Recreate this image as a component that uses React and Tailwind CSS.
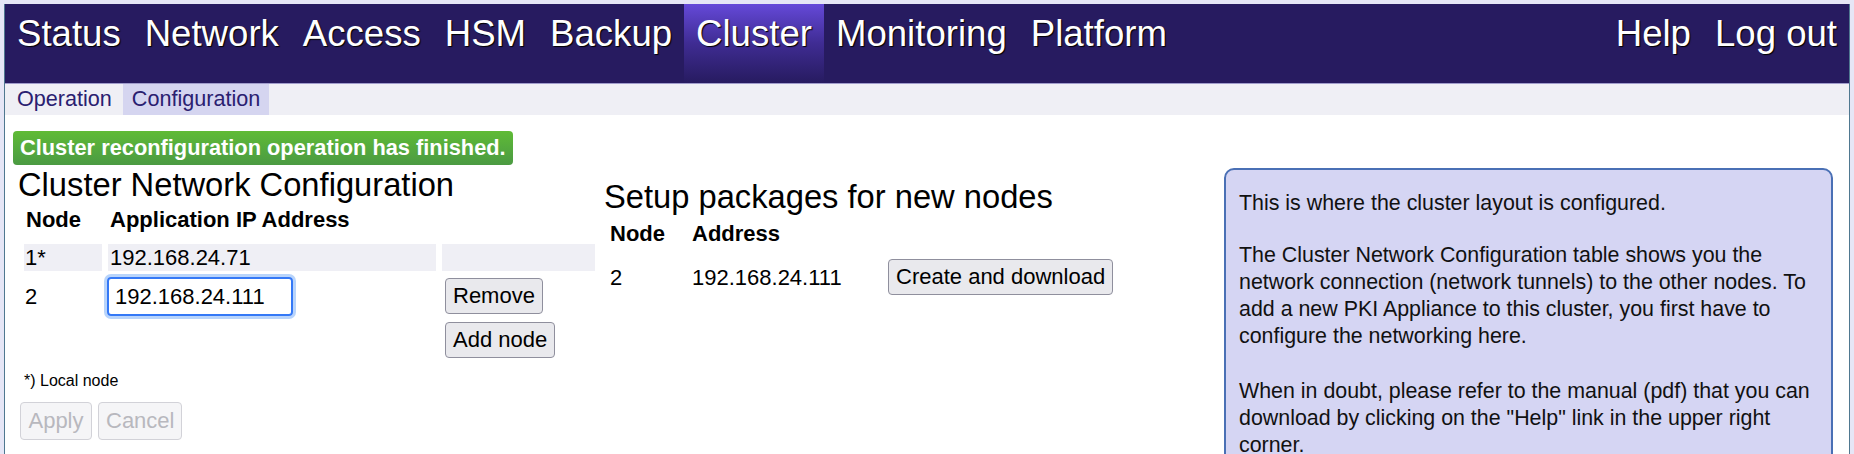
const navItems = ["Status", "Network", "Access", "HSM", "Backup", "Cluster", "Monitoring", "Platform"];

const Button = ({ children, disabled, className = "" }) => (
  <button
    disabled={disabled}
    className={
      "px-[7px] rounded-[4px] border text-[22px] leading-none " +
      (disabled
        ? "bg-[#f5f5f7] border-[#d2d2d8] text-[#b8b8be]"
        : "bg-[#e9e9ed] border-[#8f8f9d] text-black") +
      " " +
      className
    }
  >
    {children}
  </button>
);

const App = () => {
  return (
    <div className="min-h-screen bg-[#e6e6f6] pt-1 px-1 font-['Liberation_Sans',Arial,sans-serif]">
      <div className="border-x border-[#4f7890] bg-white h-[450px] overflow-hidden">
        {/* main nav */}
        <div className="flex h-[80px] bg-[#271b60] border-b border-[#a09ccc] text-white text-[36.6px] leading-none [text-shadow:1px_1px_1px_#000]">
          {navItems.map((item) => (
            <div
              key={item}
              className={
                "px-3 pt-[12px] " +
                (item === "Cluster" ? "bg-linear-to-b from-[#6549d9] via-[#3f2c93] to-[#271b60]" : "")
              }
            >
              {item}
            </div>
          ))}
          <div className="ml-auto flex">
            <div className="px-3 pt-[12px]">Help</div>
            <div className="px-3 pt-[12px]">Log out</div>
          </div>
        </div>

        {/* sub nav */}
        <div className="flex h-[31px] items-stretch gap-[3px] pl-[4px] bg-[#efeff5] text-[21.6px] text-[#2a2070]">
          <div className="px-2 flex items-center">Operation</div>
          <div className="px-[9px] flex items-center bg-[#d5d5f0]">Configuration</div>
        </div>

        <div className="flex items-start pl-2 pr-4 pt-4 text-[22px] text-black">
          {/* left column */}
          <div className="w-[591px] shrink-0">
            <div className="inline-block h-[34px] whitespace-nowrap px-[7px] rounded-[4px] bg-linear-to-b from-[#5fbb35] to-[#4b9a42] text-white font-bold text-[21.8px] leading-[34px]">
              Cluster reconfiguration operation has finished.
            </div>
            <h2 className="mt-1 pl-[5px] text-[32.7px] leading-[32px]">Cluster Network Configuration</h2>

            <div className="ml-[11px] mt-[5px] grid grid-cols-[78px_328px_153px] gap-x-[6px] leading-[27px]">
              <div className="px-[2px] font-bold">Node</div>
              <div className="px-[2px] font-bold">Application IP Address</div>
              <div></div>

              <div className="mt-[11px] px-[1px] bg-[#efeff5]">1*</div>
              <div className="mt-[11px] px-[2px] bg-[#efeff5]">192.168.24.71</div>
              <div className="mt-[11px] bg-[#efeff5]"></div>

              <div className="mt-[6px] px-[1px] flex items-start pt-[6px]">2</div>
              <div className="mt-[6px] -ml-[1px]">
                <input
                  readOnly
                  value="192.168.24.111"
                  className="w-[186px] h-[39px] px-[6px] rounded-[4px] border-2 border-[#3478f6] outline-none ring-[3px] ring-[#b8d4fb] text-[22px] text-black"
                />
              </div>
              <div className="mt-[7px] flex flex-col items-start gap-[8px] pl-[3px]">
                <Button className="h-[36px]">Remove</Button>
                <Button className="h-[36px]">Add node</Button>
              </div>
            </div>

            <div className="ml-[11px] mt-[14px] text-[16px] leading-[18px]">*) Local node</div>
            <div className="ml-[7px] mt-[12px] flex gap-[6px]">
              <Button disabled className="h-[38px] w-[72px]">Apply</Button>
              <Button disabled className="h-[38px] w-[84px]">Cancel</Button>
            </div>
          </div>

          {/* middle column */}
          <div className="mt-[50px]">
            <h2 className="text-[32.7px] leading-[32px]">Setup packages for new nodes</h2>
            <div className="mt-[7px] ml-[6px] grid grid-cols-[82px_196px_auto] gap-y-[12px] items-center leading-[27px]">
              <div className="font-bold">Node</div>
              <div className="font-bold">Address</div>
              <div></div>
              <div>2</div>
              <div>192.168.24.111</div>
              <div>
                <Button className="h-[36px]">Create and download</Button>
              </div>
            </div>
          </div>

          {/* help box */}
          <div className="ml-auto mt-[37px] w-[609px] shrink-0 h-[400px] rounded-[10px] border-2 border-[#4a70b5] bg-[#d5d5f3] pl-[13px] pr-[6px] pt-[20px] text-[21.4px] leading-[27px] text-[#111]">
            <p>This is where the cluster layout is configured.</p>
            <p className="mt-[25px]">
              The Cluster Network Configuration table shows you the network connection (network tunnels) to
              the other nodes. To add a new PKI Appliance to this cluster, you first have to configure the
              networking here.
            </p>
            <p className="mt-[28px]">
              When in doubt, please refer to the manual (pdf) that you can download by clicking on the "Help"
              link in the upper right corner.
            </p>
          </div>
        </div>
      </div>
    </div>
  );
};

export default App;
